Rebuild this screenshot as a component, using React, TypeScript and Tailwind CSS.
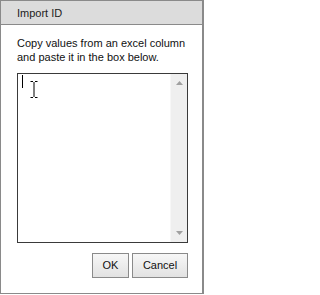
import React from "react";

export default function App() {
  return (
    <div className="w-[204px] h-[294px] bg-white border border-r-2 border-[#8a8a8a] flex flex-col font-['Liberation_Sans',Arial,sans-serif] text-[11px] text-[#111]">
      <div className="h-[24px] leading-[24px] bg-[#dcdcdc] border-b border-[#8a8a8a] pl-4 text-[#222] shrink-0">
        Import ID
      </div>
      <div className="pl-4 pt-[11px] flex flex-col">
        <p className="leading-[14px] whitespace-nowrap">
          Copy values from an excel column
          <br />
          and paste it in the box below.
        </p>
        <div className="mt-[9px] w-[171px] h-[170px] border border-[#3a3a3a] flex relative">
          <div className="flex-1 relative">
            <div className="absolute left-[4px] top-[1px] w-px h-[13px] bg-black" />
            <svg className="absolute left-[12px] top-[7px]" width="8" height="17" viewBox="0 0 8 17">
              <path d="M0.5 0.5H3M5 0.5H7.5M4 1V16M0.5 16.5H3M5 16.5H7.5" stroke="#000" strokeWidth="1" fill="none" />
            </svg>
          </div>
          <div className="w-[17px] h-full bg-[#efefef] border-l border-[#f7f7f7] flex flex-col justify-between items-center py-[7px]">
            <svg width="7" height="4" viewBox="0 0 7 4">
              <path d="M3.5 0L7 4H0Z" fill="#a0a0a0" />
            </svg>
            <svg width="7" height="4" viewBox="0 0 7 4">
              <path d="M0 0H7L3.5 4Z" fill="#a0a0a0" />
            </svg>
          </div>
        </div>
        <div className="mt-[10px] w-[171px] flex justify-end gap-[3px]">
          <button className="w-[37px] h-[25px] border border-[#8a8a8a] bg-gradient-to-b from-[#f7f7f7] to-[#e2e2e2] text-[11px] text-[#111] leading-none">
            OK
          </button>
          <button className="w-[56px] h-[25px] border border-[#8a8a8a] bg-gradient-to-b from-[#f7f7f7] to-[#e2e2e2] text-[11px] text-[#111] leading-none">
            Cancel
          </button>
        </div>
      </div>
    </div>
  );
}
